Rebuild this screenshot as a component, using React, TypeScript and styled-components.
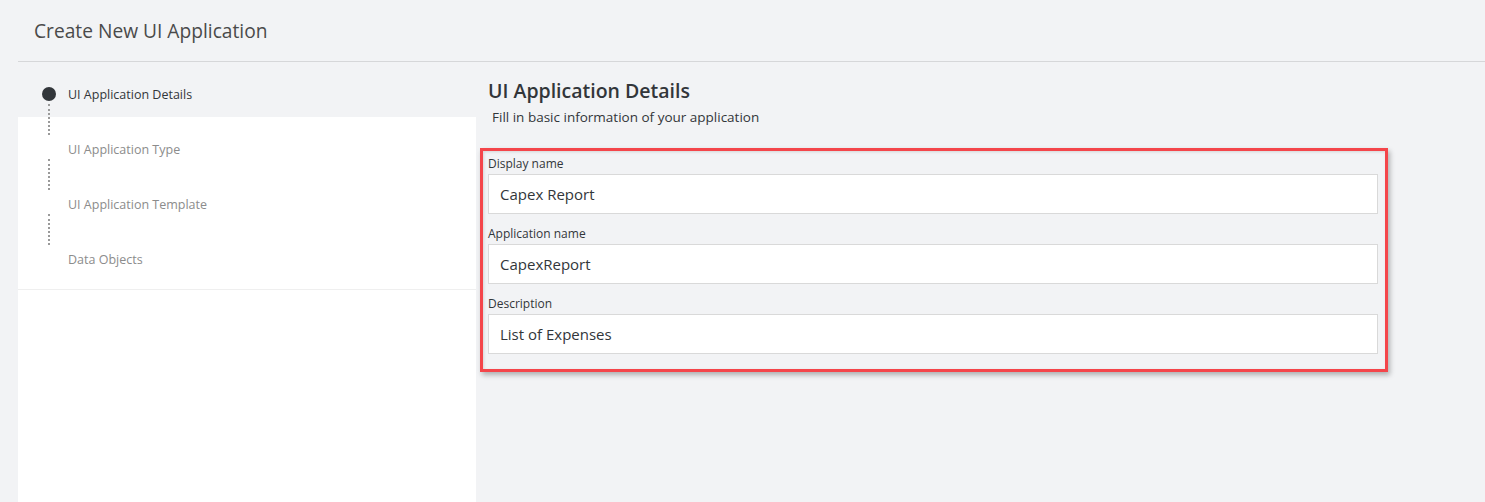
import React from "react";
import styled, { createGlobalStyle } from "styled-components";

const GlobalStyle = createGlobalStyle`
  html, body {
    margin: 0;
    padding: 0;
    background: #f2f3f5;
    font-family: "Open Sans", "Noto Sans", "Liberation Sans", sans-serif;
    color: #333;
  }
  * { box-sizing: border-box; }
`;

const Page = styled.div`
  min-height: 100vh;
  display: flex;
  flex-direction: column;
`;

const Header = styled.header`
  margin-left: 18px;
  height: 62px;
  border-bottom: 1px solid #d6d7d9;
  display: flex;
  align-items: center;
  padding-left: 16px;
  padding-bottom: 1px;
`;

const Title = styled.h1`
  margin: 0;
  font-size: 19.2px;
  font-weight: 400;
  color: #4a4a4a;
`;

const Body = styled.div`
  flex: 1;
  display: flex;
  margin-left: 18px;
`;

const Sidebar = styled.aside`
  width: 458px;
  flex: none;
  background: #ffffff;
  margin-top: 55px;
  display: flex;
  flex-direction: column;
`;

const StepList = styled.ol`
  list-style: none;
  margin: -32px 0 0 0;
  padding: 0 0 19px 21px;
  border-bottom: 1px solid #efefef;
`;

const Step = styled.li<{ $last?: boolean }>`
  display: grid;
  grid-template-columns: 20px 1fr;
  grid-template-rows: 20px ${(p) => (p.$last ? "0" : "31px")};
  column-gap: 9px;
  margin-bottom: ${(p) => (p.$last ? "0" : "4px")};
`;

const Marker = styled.span`
  display: flex;
  align-items: center;
  justify-content: center;
`;

const Dot = styled.span`
  width: 14px;
  height: 14px;
  border-radius: 50%;
  background: #32363a;
  margin-top: -2px;
`;

const Connector = styled.span`
  justify-self: center;
  width: 0;
  height: 31px;
  border-left: 2px dotted #9a9a9a;
  margin-top: -1px;
`;

const StepLabel = styled.span<{ $active?: boolean }>`
  font-size: 12.5px;
  line-height: 20px;
  color: ${(p) => (p.$active ? "#32363a" : "#8c8c8c")};
`;

const Main = styled.main`
  flex: 1;
  padding: 16px 97px 0 4px;
`;

const Heading = styled.h2`
  margin: 0 0 4px 8px;
  font-size: 19.5px;
  line-height: 26px;
  font-weight: 600;
  color: #32363a;
`;

const Subheading = styled.p`
  margin: 0 0 22px 12px;
  font-size: 13.5px;
  line-height: 18px;
  color: #32363a;
`;

const FormBox = styled.section`
  border: 3px solid #f4454a;
  padding: 4px 7px 15px 5px;
  display: flex;
  flex-direction: column;
  gap: 11px;
  box-shadow: 2px 3px 5px rgba(0, 0, 0, 0.28), inset 1px 1px 3px rgba(0, 0, 0, 0.12);
`;

const Field = styled.label`
  display: flex;
  flex-direction: column;
`;

const FieldLabel = styled.span`
  font-size: 12px;
  line-height: 18px;
  margin-bottom: 1px;
  color: #32363a;
`;

const Input = styled.input`
  height: 40px;
  border: 1px solid #d9d9d9;
  background: #ffffff;
  padding: 0 11px;
  font-family: inherit;
  font-size: 15px;
  color: #32363a;
  outline: none;
`;

const steps = [
  "UI Application Details",
  "UI Application Type",
  "UI Application Template",
  "Data Objects",
];

const fields = [
  { label: "Display name", value: "Capex Report" },
  { label: "Application name", value: "CapexReport" },
  { label: "Description", value: "List of Expenses" },
];

export default function App() {
  return (
    <Page>
      <GlobalStyle />
      <Header>
        <Title>Create New UI Application</Title>
      </Header>
      <Body>
        <Sidebar>
          <StepList>
            {steps.map((s, i) => {
              const last = i === steps.length - 1;
              return (
                <Step key={s} $last={last}>
                  <Marker>{i === 0 && <Dot />}</Marker>
                  <StepLabel $active={i === 0}>{s}</StepLabel>
                  {!last && <Connector />}
                </Step>
              );
            })}
          </StepList>
        </Sidebar>
        <Main>
          <Heading>UI Application Details</Heading>
          <Subheading>Fill in basic information of your application</Subheading>
          <FormBox>
            {fields.map((f) => (
              <Field key={f.label}>
                <FieldLabel>{f.label}</FieldLabel>
                <Input defaultValue={f.value} readOnly />
              </Field>
            ))}
          </FormBox>
        </Main>
      </Body>
    </Page>
  );
}
